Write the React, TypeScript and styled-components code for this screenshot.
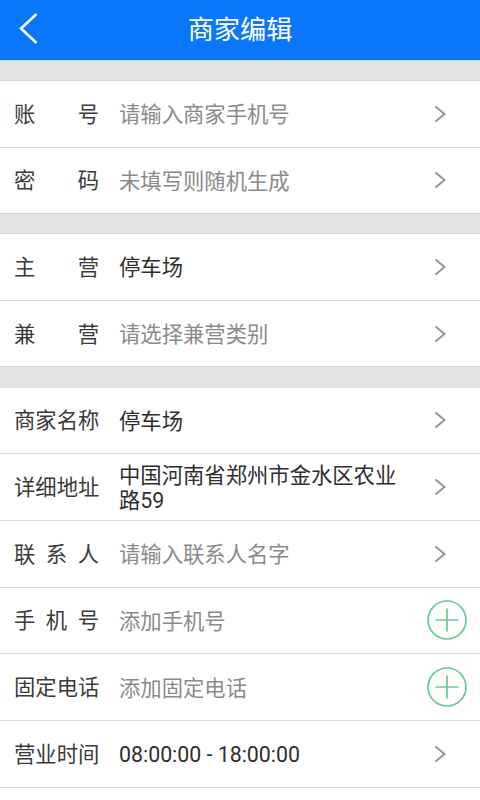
import React from "react";
import styled, { createGlobalStyle } from "styled-components";

const Global = createGlobalStyle`
  html, body { margin: 0; padding: 0; background: #fff; }
  body { font-family: "Roboto", "Noto Sans CJK SC", sans-serif; overflow: hidden; }
`;
const Page = styled.div`
  width: 480px;
  height: 800px;
  overflow: hidden;
  background: #fff;
`;
const Header = styled.header`
  height: 61.2px;
  box-sizing: border-box;
  background: #0a77fb;
  display: flex;
  align-items: center;
  justify-content: center;
  position: relative;
  border-bottom: 1px solid #c4dcf5;
`;
const Back = styled.svg`
  position: absolute;
  left: 18px;
  top: 12px;
`;
const Title = styled.h1`
  margin: 0;
  color: #fff;
  font-size: 26.2px;
  font-weight: 400;
  line-height: 60px;
`;
const Gap = styled.div<{ $line?: boolean }>`
  height: ${(p) => (p.$line ? "19.8px" : "20.2px")};
  box-sizing: border-box;
  background: #e3e3e3;
  border-bottom: ${(p) => (p.$line ? "1px solid #d6d6d6" : "0")};
`;
const Row = styled.div<{ $last?: boolean }>`
  height: 66.667px;
  box-sizing: border-box;
  display: flex;
  align-items: center;
  background: #fff;
  padding-left: 14px;
  border-bottom: 1px solid ${(p) => (p.$last ? "#d6d6d6" : "#dedede")};
`;
const Label = styled.span`
  width: 85px;
  flex: none;
  display: flex;
  justify-content: space-between;
  margin-right: 20px;
  padding-top: 2px;
  font-size: 21.33px;
  line-height: 28px;
  color: #3a3a3a;
`;
const Value = styled.span<{ $muted?: boolean }>`
  flex: 1;
  min-width: 0;
  padding: 2px 20px 0 0;
  font-size: 21.33px;
  line-height: 25px;
  color: ${(p) => (p.$muted ? "#8a8a8a" : "#2e2e2e")};
`;
const Chevron = styled.svg`
  flex: none;
  margin-right: 33px;
`;
const Plus = styled.svg`
  flex: none;
  margin-right: 13px;
`;

const Arrow = () => (
  <Chevron width="14" height="18" viewBox="0 0 14 18" fill="none">
    <path d="M2.5 1.5 L11.5 9 L2.5 16.5" stroke="#909090" strokeWidth="1.8" />
  </Chevron>
);
const Add = () => (
  <Plus width="40" height="40" viewBox="0 0 40 40" fill="none">
    <circle cx="20" cy="20" r="19" stroke="#66cb92" strokeWidth="1.7" />
    <path d="M8.5 20 H31.5 M20 8.5 V31.5" stroke="#66cb92" strokeWidth="1.7" />
  </Plus>
);
const Chars = ({ t }: { t: string }) => (
  <Label>
    {t.split("").map((c, i) => (
      <span key={i}>{c}</span>
    ))}
  </Label>
);

export default function App() {
  return (
    <Page>
      <Global />
      <Header>
        <Back width="22" height="34" viewBox="0 0 22 34" fill="none">
          <path d="M18.5 2 L3 16.5 L18.5 31" stroke="#fff" strokeWidth="2.6" />
        </Back>
        <Title>商家编辑</Title>
      </Header>
      <Gap $line />
      <Row><Chars t="账号" /><Value $muted>请输入商家手机号</Value><Arrow /></Row>
      <Row $last><Chars t="密码" /><Value $muted>未填写则随机生成</Value><Arrow /></Row>
      <Gap $line />
      <Row><Chars t="主营" /><Value>停车场</Value><Arrow /></Row>
      <Row $last><Chars t="兼营" /><Value $muted>请选择兼营类别</Value><Arrow /></Row>
      <Gap />
      <Row><Chars t="商家名称" /><Value>停车场</Value><Arrow /></Row>
      <Row><Chars t="详细地址" /><Value>中国河南省郑州市金水区农业路59</Value><Arrow /></Row>
      <Row><Chars t="联系人" /><Value $muted>请输入联系人名字</Value><Arrow /></Row>
      <Row><Chars t="手机号" /><Value $muted>添加手机号</Value><Add /></Row>
      <Row><Chars t="固定电话" /><Value $muted>添加固定电话</Value><Add /></Row>
      <Row><Chars t="营业时间" /><Value>08:00:00 - 18:00:00</Value><Arrow /></Row>
    </Page>
  );
}
